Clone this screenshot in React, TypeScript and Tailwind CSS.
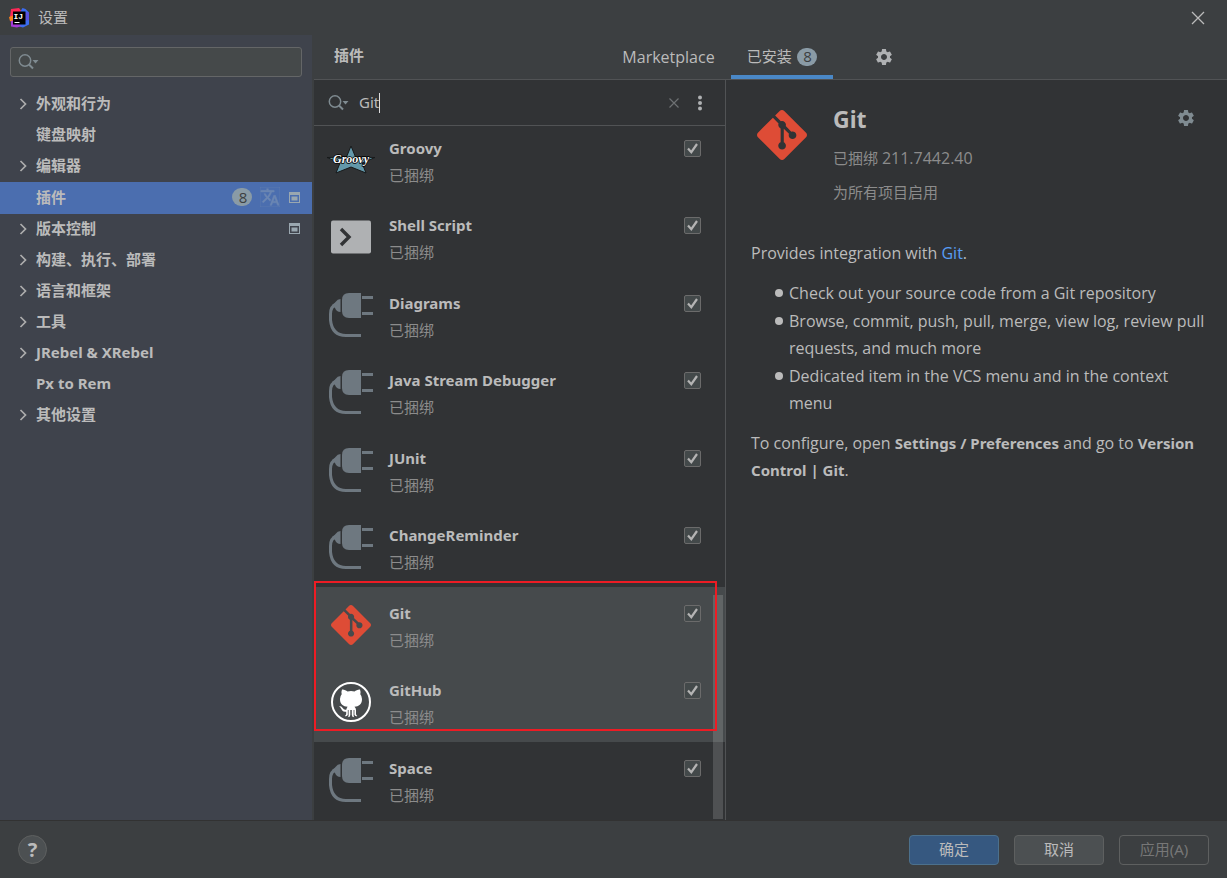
import { useState } from 'react'
import clsx from 'clsx'
import { MdSettings, MdTranslate } from 'react-icons/md'
import { SiGit } from 'react-icons/si'

interface TreeItem {
  label: string
  expandable: boolean
  badge?: number
  translate?: boolean
  projectLevel?: boolean
}

interface Plugin {
  name: string
  icon: 'groovy' | 'shell' | 'plug' | 'git' | 'github'
}

const treeItems: TreeItem[] = [
  { label: '外观和行为', expandable: true },
  { label: '键盘映射', expandable: false },
  { label: '编辑器', expandable: true },
  { label: '插件', expandable: false, badge: 8, translate: true, projectLevel: true },
  { label: '版本控制', expandable: true, projectLevel: true },
  { label: '构建、执行、部署', expandable: true },
  { label: '语言和框架', expandable: true },
  { label: '工具', expandable: true },
  { label: 'JRebel & XRebel', expandable: true },
  { label: 'Px to Rem', expandable: false },
  { label: '其他设置', expandable: true },
]

const plugins: Plugin[] = [
  { name: 'Groovy', icon: 'groovy' },
  { name: 'Shell Script', icon: 'shell' },
  { name: 'Diagrams', icon: 'plug' },
  { name: 'Java Stream Debugger', icon: 'plug' },
  { name: 'JUnit', icon: 'plug' },
  { name: 'ChangeReminder', icon: 'plug' },
  { name: 'Git', icon: 'git' },
  { name: 'GitHub', icon: 'github' },
  { name: 'Space', icon: 'plug' },
]

function IdeaLogo() {
  return (
    <svg width="20" height="20" viewBox="0 0 20 20" aria-hidden="true">
      <path d="M2 1 L10 0 L13 4 L6 15 L1 9 Z" fill="#fe2857" />
      <path d="M0 9 L4 7.500 L5 15 L1 13 Z" fill="#fc801d" />
      <path d="M11 4 L13.500 0 L16.500 1 L20 4.500 V16.500 L14 19.500 L8 18 Z" fill="#3b6cf0" />
      <path d="M15 4 L20 4.500 V12 L16 13 Z" fill="#5a50e0" />
      <path d="M2 13 L6 12 L12 18 L8 19.500 L2 18.500 Z" fill="#a43ad6" />
      <rect x="4" y="3.5" width="12.5" height="13" fill="#000" />
      <rect x="5.5" y="14" width="5" height="1" fill="#fff" />
      <text x="4.500" y="10.500" fontSize="8" fontWeight="700" fontFamily="Liberation Mono, monospace" fill="#fff">
        IJ
      </text>
    </svg>
  )
}

function SearchIcon() {
  return (
    <svg width="22" height="18" viewBox="0 0 22 18" fill="none" aria-hidden="true" className="shrink-0">
      <circle cx="7" cy="7.5" r="5.7" stroke="#7f8b91" strokeWidth="1.5" />
      <path d="M11 11.5 L15 15.5" stroke="#7f8b91" strokeWidth="2" />
      <path d="M14.5 7 H20.5 L17.5 10.5 Z" fill="#7f8b91" />
    </svg>
  )
}

function Chevron() {
  return (
    <svg width="8" height="12" viewBox="0 0 8 12" fill="none" aria-hidden="true">
      <path d="M1.500 1 L6.500 6 L1.500 11" stroke="#adadad" strokeWidth="1.7" />
    </svg>
  )
}

function ProjectIcon() {
  return (
    <svg width="11" height="11" viewBox="0 0 11 11" aria-hidden="true">
      <path fillRule="evenodd" d="M0 0 H11 V11 H0 Z M1 3 V10 H10 V3 Z" fill="#9aa7b0" />
      <rect x="2.5" y="4.5" width="6" height="4" fill="#9aa7b0" />
    </svg>
  )
}

function GroovyIcon() {
  return (
    <svg width="50" height="40" viewBox="0 0 50 40" aria-hidden="true">
      <path
        d="M25 6 L29.500 17 L49 17.500 L36 23 L40 33 L25 27 L10 33 L14 23 L1 17.500 L20.500 17 Z"
        fill="#6398aa"
        stroke="#17191a"
        strokeWidth="1"
      />
      <text
        x="25"
        y="23"
        textAnchor="middle"
        fontSize="12"
        fontWeight="700"
        fontStyle="italic"
        fontFamily="Liberation Serif, serif"
        fill="#fff"
        stroke="#000"
        strokeWidth="1.5"
        paintOrder="stroke"
      >
        Groovy
      </text>
    </svg>
  )
}

function ShellIcon() {
  return (
    <svg width="40" height="34" viewBox="0 0 40 34" fill="none" aria-hidden="true">
      <rect width="40" height="33" y="0.5" rx="2" fill="#afb1b3" />
      <path d="M10 9 L18 17 L10 25" stroke="#313335" strokeWidth="3.4" />
    </svg>
  )
}

function PlugIcon() {
  return (
    <svg width="44" height="44" viewBox="0 0 44 44" fill="none" aria-hidden="true">
      <path d="M32 0 V25 H20 Q13 25 13 18 V7 Q13 0 20 0 Z" fill="#6e7880" />
      <path d="M33 3 H44 V6 H33 Z M33 19 H44 V22 H33 Z" fill="#6e7880" />
      <path d="M11.500 6 V19 Q7.500 19 6 15 L3 12 Q5.500 10.500 6.500 9 Q8.500 6 11.500 6 Z" fill="#6e7880" />
      <path d="M8 11 Q1.500 13 1.500 21 V27 Q3 42.500 17 42.500 H32" stroke="#6e7880" strokeWidth="3" />
    </svg>
  )
}

function GitHubIcon() {
  return (
    <svg width="40" height="40" viewBox="0 0 40 40" aria-hidden="true">
      <circle cx="20" cy="20" r="19" fill="none" stroke="#fff" strokeWidth="2" />
      <path
        d="M11 7.500 C13 7.200 15 8.500 16.500 9.500 Q20 8.700 23.500 9.500 C25 8.500 27 7.200 29 7.500 Q30 10 29.300 12.300 Q31 14.200 31 17 C31 22.500 27.800 24.300 23.500 24.800 Q25 26 25 28 V32 Q25 33.200 26.300 34 Q24 34.700 23.400 32.700 V28 H22.600 V33.500 Q22.600 34.700 23.300 35.200 Q20.800 35.200 20.800 33 V28 H19.300 V33 Q19.300 35.200 16.800 35.200 Q17.600 34.700 17.600 33.500 V28 H16.800 V32.700 Q16.200 34.700 13.800 34 Q15.200 33.200 15.200 32 V29.700 C11.800 30.200 11 28.300 10.200 26.800 Q9.300 25.200 8 24.600 Q9.800 23.700 11.500 25.800 C12.700 27.500 13.700 28 15.400 27.500 Q15.600 25.800 16.600 24.800 C12.200 24.300 9 22.500 9 17 Q9 14.200 10.700 12.300 Q10 10 11 7.500 Z"
        fill="#fff"
      />
    </svg>
  )
}

function PluginIcon({ icon }: { icon: Plugin['icon'] }) {
  switch (icon) {
    case 'groovy':
      return <GroovyIcon />
    case 'shell':
      return <ShellIcon />
    case 'git':
      return <SiGit size={40} color="#de4c36" />
    case 'github':
      return <GitHubIcon />
    default:
      return <PlugIcon />
  }
}

function CountBadge({ count }: { count: number }) {
  return (
    <span className="flex h-[18px] w-5 items-center justify-center rounded-full bg-[#8a9ba6] pl-0.5 font-['Open_Sans',sans-serif] text-[15px] leading-none text-[#3c3f41]">
      {count}
    </span>
  )
}

interface PluginRowProps {
  plugin: Plugin
  selected: boolean
  checked: boolean
  onToggle: () => void
}

function PluginRow({ plugin, selected, checked, onToggle }: PluginRowProps) {
  const id = `plugin-${plugin.name.replace(/ /g, '-')}`
  return (
    <li className={clsx('flex pr-6 pl-3 odd:h-[77px] even:h-[78px]', selected && 'bg-[#464a4c]')}>
      <div className="flex h-[76px] w-[50px] shrink-0 items-center justify-center">
        <PluginIcon icon={plugin.icon} />
      </div>
      <div className="ml-[13px] flex-1 pt-[13px]">
        <label htmlFor={id} className="block leading-[27px] font-bold">
          {plugin.name}
        </label>
        <p className="leading-[27px] text-[#8c8c8c]">已捆绑</p>
      </div>
      <div className="mt-[18px] grid size-[17px]">
        <input
          id={id}
          type="checkbox"
          checked={checked}
          onChange={onToggle}
          className="col-start-1 row-start-1 size-[17px] appearance-none rounded-[2px] border border-[#6b6b6b] bg-[#43494a]"
        />
        {checked && (
          <svg
            viewBox="0 0 17 17"
            fill="none"
            aria-hidden="true"
            className="pointer-events-none col-start-1 row-start-1 size-[17px]"
          >
            <path d="M4 8.500 L7.300 12.200 L13 4" stroke="#b4b4b4" strokeWidth="2.2" />
          </svg>
        )}
      </div>
    </li>
  )
}

function Sidebar() {
  const [selected, setSelected] = useState('插件')

  return (
    <aside className="w-[312px] shrink-0 bg-[#3f434c] pt-3">
      <div className="mx-[10px] flex h-[30px] items-center rounded-[3px] border border-[#646667] bg-[#45494a] pl-[7px]">
        <SearchIcon />
        <input type="text" aria-label="搜索设置" className="min-w-0 flex-1 bg-transparent outline-none" />
      </div>
      <nav className="mt-3">
        {treeItems.map((item) => (
          <button
            key={item.label}
            type="button"
            onClick={() => setSelected(item.label)}
            className={clsx(
              'flex w-full items-center pr-3 pb-0.5 pl-[19px] text-left font-bold',
              item.label === selected ? 'h-8 bg-[#4b6eaf]' : 'h-[31px]',
            )}
          >
            <span className="w-[17px]">{item.expandable && <Chevron />}</span>
            <span className="flex-1">{item.label}</span>
            <span className="flex items-center font-normal">
              {item.badge && <CountBadge count={item.badge} />}
              {item.translate && (
                <MdTranslate size={20} color="#6b86b3" stroke="#6b86b3" strokeWidth={0.6} className="mr-[9px] ml-2" />
              )}
              {item.projectLevel && <ProjectIcon />}
            </span>
          </button>
        ))}
      </nav>
    </aside>
  )
}

function PluginHeader() {
  return (
    <header className="grid h-[45px] grid-cols-[1fr_auto_1fr] border-b border-[#515355] bg-[#3c3f41]">
      <h1 className="pl-5 leading-10 font-bold">插件</h1>
      <div className="flex">
        <button type="button" className="px-4 font-['Open_Sans',sans-serif] text-base">
          Marketplace
        </button>
        <button type="button" className="flex items-center gap-[5px] border-b-4 border-[#4a88c7] px-4 pt-[3px]">
          已安装
          <CountBadge count={8} />
        </button>
        <button type="button" aria-label="插件设置" className="flex w-[102px] items-center justify-center">
          <MdSettings size={20} color="#afb1b3" />
        </button>
      </div>
    </header>
  )
}

function PluginList() {
  const [query, setQuery] = useState('Git')
  const [disabled, setDisabled] = useState<string[]>([])
  const selected = ['Git', 'GitHub']

  function toggle(name: string) {
    setDisabled(disabled.includes(name) ? disabled.filter((n) => n !== name) : [...disabled, name])
  }

  return (
    <section className="flex w-[412px] shrink-0 flex-col border-r border-[#515355]">
      <div className="flex h-[46px] items-center border-b border-[#515355] pr-[22px] pl-[14px]">
        <SearchIcon />
        <div className="ml-[9px] flex flex-1 items-center">
          <input
            type="text"
            aria-label="搜索插件"
            value={query}
            onChange={(e) => setQuery(e.target.value)}
            className="field-sizing-content bg-transparent outline-none"
          />
          <span className="h-5 w-px bg-[#dddddd]" />
        </div>
        <button type="button" aria-label="清除" onClick={() => setQuery('')}>
          <svg width="10" height="10" viewBox="0 0 10 10" aria-hidden="true">
            <path d="M0.500 0.500 L9.500 9.500 M9.500 0.500 L0.500 9.500" stroke="#6e7173" strokeWidth="1.2" />
          </svg>
        </button>
        <button type="button" aria-label="更多" className="ml-[18px]">
          <svg width="6" height="16" viewBox="0 0 6 16" fill="#afb1b3" aria-hidden="true">
            <circle cx="3" cy="2.500" r="2" />
            <circle cx="3" cy="8" r="2" />
            <circle cx="3" cy="13.500" r="2" />
          </svg>
        </button>
      </div>

      <div className="relative flex-1 overflow-hidden">
        {/* The list is scrolled a few pixels past its top */}
        <ul className="-mt-1">
          {plugins.map((plugin) => (
            <PluginRow
              key={plugin.name}
              plugin={plugin}
              selected={selected.includes(plugin.name)}
              checked={!disabled.includes(plugin.name)}
              onToggle={() => toggle(plugin.name)}
            />
          ))}
        </ul>
        {/* Scrollbar thumb and the highlight frame around the git plugins */}
        <div className="absolute right-0.5 bottom-px h-56 w-[10px] bg-white/15" />
        <div className="pointer-events-none absolute top-[455px] right-2 left-0 h-[150px] border-2 border-[#ed1c24]" />
      </div>
    </section>
  )
}

function Strong({ children }: { children: string }) {
  return <b className="font-['Noto_Sans',sans-serif] text-[15px]">{children}</b>
}

function PluginDetails() {
  return (
    <article className="min-w-0 flex-1 pt-[25px] pr-5 pl-[25px]">
      <div className="flex items-start">
        <SiGit size={50} color="#de4c36" className="mt-[5px] ml-[6px] shrink-0" />
        <div className="ml-[26px] flex-1">
          <h2 className="text-[23px] leading-7 font-bold">Git</h2>
          <p className="mt-2 leading-[34px] text-[#8c8c8c]">
            已捆绑 <span className="font-['Open_Sans',sans-serif] text-base leading-none">211.7442.40</span>
          </p>
          <p className="leading-[34px] text-[#8c8c8c]">为所有项目启用</p>
        </div>
        <button type="button" aria-label="Git 设置" className="mt-[3px] mr-[11px]">
          <MdSettings size={20} color="#7f8b91" />
        </button>
      </div>

      <div className="mt-[31px] font-['Open_Sans',sans-serif] text-base leading-[27px]">
        <p>
          Provides integration with{' '}
          <a href="#git" className="text-[#589df6]">
            Git
          </a>
          .
        </p>
        <ul className="my-[13px] space-y-px pl-6">
          {[
            'Check out your source code from a Git repository',
            'Browse, commit, push, pull, merge, view log, review pull requests, and much more',
            'Dedicated item in the VCS menu and in the context menu',
          ].map((text) => (
            <li key={text} className="flex gap-[6px]">
              <span className="mt-[9px] size-2 shrink-0 rounded-full bg-[#bbbbbb]" />
              <span>{text}</span>
            </li>
          ))}
        </ul>
        <p>
          To configure, open <Strong>Settings / Preferences</Strong> and go to <Strong>Version Control | Git</Strong>.
        </p>
      </div>
    </article>
  )
}

export default function App() {
  return (
    <div className="flex min-h-screen flex-col bg-[#3c3f41] font-['Noto_Sans','Noto_Sans_CJK_SC',sans-serif] text-[15px] text-[#bbbbbb]">
      <div className="flex h-[35px] items-center pr-[22px] pl-[9px]">
        <IdeaLogo />
        <span className="ml-[9px] flex-1">设置</span>
        <button type="button" aria-label="关闭">
          <svg width="14" height="14" viewBox="0 0 14 14" aria-hidden="true">
            <path d="M1 1 L13 13 M13 1 L1 13" stroke="#bbbbbb" strokeWidth="1.3" />
          </svg>
        </button>
      </div>

      <main className="flex flex-1">
        <Sidebar />
        <div className="ml-0.5 flex min-w-0 flex-1 flex-col bg-[#313335]">
          <PluginHeader />
          <div className="flex flex-1">
            <PluginList />
            <PluginDetails />
          </div>
        </div>
      </main>

      <footer className="flex h-[58px] items-center gap-[15px] border-t border-[#323232] pr-[18px] pl-[18px]">
        <button
          type="button"
          aria-label="帮助"
          className="mr-auto size-[29px] rounded-full border border-[#5e6060] bg-[#4c5052] text-xl leading-none font-bold"
        >
          ?
        </button>
        <button type="button" className="h-[30px] w-[90px] rounded border border-[#4c708c] bg-[#365880]">
          确定
        </button>
        <button type="button" className="h-[30px] w-[90px] rounded border border-[#5e6060] bg-[#4c5052]">
          取消
        </button>
        <button type="button" disabled className="h-[30px] w-[90px] rounded border border-[#5e6060] text-[#777777]">
          应用(A)
        </button>
      </footer>
    </div>
  )
}
